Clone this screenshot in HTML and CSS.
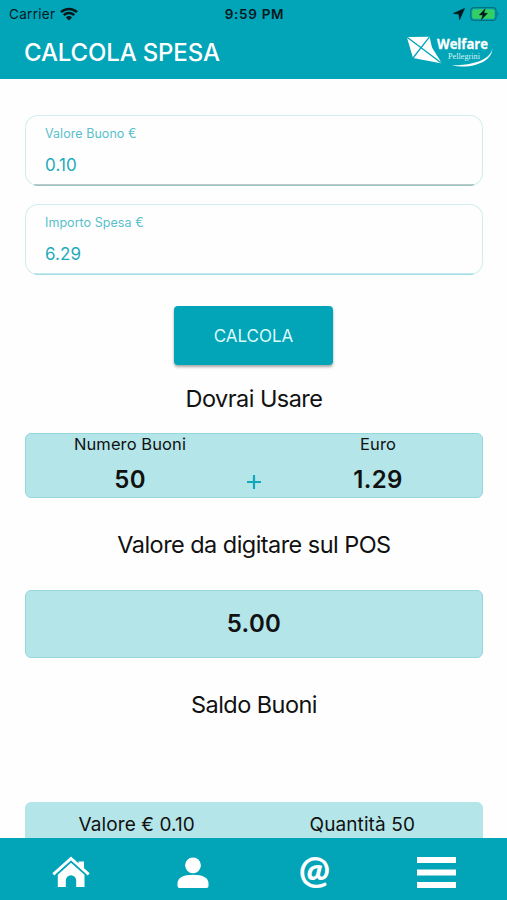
FILE: index.html
```html
<!DOCTYPE html>
<html lang="it">
  <head>
    <meta charset="UTF-8" />
    <meta name="viewport" content="width=device-width, initial-scale=1.0" />
    <title>Calcola Spesa</title>
    <link rel="stylesheet" href="styles.css">
  </head>
  <body>
    <header class="header">
      <div class="status">
        <div class="status-left">
          <span class="carrier">Carrier</span>
          <svg class="wifi" viewBox="0 0 18 14">
            <path d="M1 5.2a11.6 11.6 0 0 1 16 0M3.8 8.2a7.5 7.5 0 0 1 10.4 0" fill="none" stroke="#04191c" stroke-width="2.5" />
            <path d="M9 13.6 5.9 10.5a4.5 4.5 0 0 1 6.2 0z" fill="#04191c" />
          </svg>
        </div>
        <span class="clock">9:59 PM</span>
        <div class="status-right">
          <svg class="location" viewBox="0 0 12 12">
            <path d="M11.5.5 6.6 11.5 5.9 6.1.5 5.4z" fill="#04191c" stroke="#04191c" stroke-width=".7" />
          </svg>
          <svg class="battery" viewBox="0 0 30 14">
            <rect x=".7" y=".7" width="25.4" height="12.6" rx="3.4" fill="none" stroke="#04737f" stroke-width="1.2" />
            <path d="M27.6 4.6q2 2.4 0 4.8z" fill="#04737f" />
            <rect x="2.2" y="2.2" width="22.4" height="9.6" rx="2" fill="#33cf65" />
            <path d="M15.2 1.8 9.3 7.9h3.5l-1.4 4.8 6-6.4h-3.6z" fill="#04191c" stroke="#04191c" stroke-width=".5" />
          </svg>
        </div>
      </div>
      <div class="title-bar">
        <h1 class="title">CALCOLA SPESA</h1>
        <svg class="logo" viewBox="0 0 88 40">
          <path d="M.8 5 23.500 4.800 26 15.500 36 31.500 7 26z" fill="#fff" />
          <path d="M.8 5 36 31.500M23.500 4.800 7 26" fill="none" stroke="#02a4b8" stroke-width="1.300" />
          <path d="M85.500 12c4 10-8 21.500-40 21.300C66 38 91 29 85.500 12z" fill="#fff" />
          <text class="logo-name" x="31" y="16.700" textLength="51" lengthAdjust="spacingAndGlyphs">Welfare</text>
          <text class="logo-sub" x="42" y="27" textLength="32" lengthAdjust="spacingAndGlyphs">Pellegrini</text>
        </svg>
      </div>
    </header>

    <main class="content">
      <div class="field">
        <label class="field-label">Valore Buono €</label>
        <span class="field-value">0.10</span>
      </div>
      <div class="field field-active">
        <label class="field-label">Importo Spesa €</label>
        <span class="field-value">6.29</span>
      </div>

      <button class="btn">CALCOLA</button>

      <h2 class="heading heading-usare">Dovrai Usare</h2>
      <div class="box box-result">
        <div class="col">
          <span class="col-label">Numero Buoni</span>
          <span class="number">50</span>
        </div>
        <svg class="plus" viewBox="0 0 14 14">
          <path d="M7 0v14M0 7h14" stroke="#12a8bb" stroke-width="2.2" />
        </svg>
        <div class="col">
          <span class="col-label">Euro</span>
          <span class="number">1.29</span>
        </div>
      </div>

      <h2 class="heading heading-pos">Valore da digitare sul POS</h2>
      <div class="box box-pos">
        <span class="number">5.00</span>
      </div>

      <h2 class="heading heading-saldo">Saldo Buoni</h2>
      <div class="box box-saldo">
        <span class="saldo-item">Valore € 0.10</span>
        <span class="saldo-item saldo-qty">Quantità 50</span>
      </div>
    </main>

    <nav class="tabs">
      <a class="tab">
        <svg class="icon-home" viewBox="0 0 38 32">
          <path d="M1.300 18.300 19 2.500l17.700 15.800" fill="none" stroke="#fff" stroke-width="3" />
          <path d="M26.500 5.500H32V14l-5.500-4.900zM19 6.800 32.500 18.800V31H24.200V24.500a5.200 5.200 0 0 0-10.400 0V31H5.800V18.800z" fill="#fff" />
          <path d="M4 18.600 19 5.300l15 13.300" fill="none" stroke="#02a4b8" stroke-width="1" />
        </svg>
      </a>
      <a class="tab">
        <svg class="icon-user" viewBox="0 0 32 32">
          <circle cx="16" cy="8.300" r="7.900" fill="#fff" />
          <path d="M.5 29v-2.500C.5 20.500 6 17.700 16 17.700s15.500 2.800 15.500 8.800V29q0 2-2 2h-27q-2 0-2-2z" fill="#fff" />
        </svg>
      </a>
      <a class="tab"><span class="icon-at">@</span></a>
      <a class="tab">
        <svg class="icon-menu" viewBox="0 0 39 31">
          <path d="M0 3h39M0 15.500h39M0 28h39" stroke="#fff" stroke-width="5.800" />
        </svg>
      </a>
    </nav>
  </body>
</html>
```
FILE: styles.css
```css
* {
  box-sizing: border-box;
}
body {
  margin: 0;
  height: 900px;
  display: flex;
  flex-direction: column;
  overflow: hidden;
  background: #fefefe;
  font-family: Inter, "Liberation Sans", sans-serif;
  color: #111;
}
.header {
  flex: none;
  height: 79px;
  background: #02a4b8;
}
.status {
  display: grid;
  grid-template-columns: 1fr auto 1fr;
  align-items: center;
  height: 27px;
  padding: 0 7px 0 9px;
  color: #04191c;
  font-size: 13px;
}
.status-left,
.status-right {
  display: flex;
  align-items: center;
}
.status-left {
  gap: 5px;
}
.status-right {
  justify-content: flex-end;
  gap: 5px;
}
.carrier {
  font-size: 13.5px;
  letter-spacing: 0.3px;
}
.wifi {
  width: 18px;
  height: 14px;
}
.clock {
  font-size: 13.5px;
  font-weight: 600;
  letter-spacing: 0.7px;
}
.location {
  width: 12px;
  height: 12px;
}
.battery {
  width: 30px;
  height: 14px;
}
.title-bar {
  display: flex;
  align-items: center;
  justify-content: space-between;
  height: 50px;
  padding: 0 13px 0 24px;
}
.title {
  margin: 0;
  font-size: 24px;
  font-weight: 500;
  letter-spacing: -0.15px;
  color: #fff;
}
.logo {
  width: 88px;
  height: 40px;
  overflow: visible;
}
.logo-name {
  font: bold 15px "Open Sans", sans-serif;
  fill: #fff;
  stroke: #fff;
  stroke-width: 0.3px;
}
.logo-sub {
  font: 8.5px "Liberation Serif", serif;
  fill: #d8f4f6;
}
.content {
  flex: 1;
  min-height: 0;
  overflow: hidden;
  display: flex;
  flex-direction: column;
  padding: 36px 24px 0 25px;
}
.field {
  flex: none;
  display: flex;
  flex-direction: column;
  height: 71px;
  margin-bottom: 18px;
  padding: 10px 19px 0;
  border: 1px solid rgba(2, 164, 160, 0.18);
  border-radius: 13px;
  background: linear-gradient(#bccac9, #bccac9) center bottom / calc(100% - 18px) 2px no-repeat border-box;
  color: #1fabbc;
}
.field-active {
  background-image: linear-gradient(#c5e9ef, #c5e9ef);
}
.field-label {
  font-size: 12.5px;
  line-height: 16px;
  letter-spacing: 0.05px;
  color: #58c0cb;
}
.field-value {
  margin-top: 13px;
  font-size: 17px;
  line-height: 20px;
  letter-spacing: 0.1px;
}
.btn {
  flex: none;
  align-self: center;
  width: 159px;
  height: 59px;
  margin: 13px 1px 0 0;
  padding: 0;
  border: 0;
  border-radius: 4px;
  background: #02a4b8;
  box-shadow: 0 2px 3px rgba(0, 0, 0, 0.35);
  font-family: inherit;
  font-size: 17px;
  color: #dcfafa;
}
.heading {
  flex: none;
  margin: 0;
  font-size: 23.5px;
  font-weight: 400;
  line-height: 28px;
  letter-spacing: -0.55px;
  text-align: center;
}
.heading-usare {
  margin-top: 20px;
}
.heading-pos {
  margin-top: 33px;
}
.heading-saldo {
  margin-top: 33px;
}
.box {
  flex: none;
  display: flex;
  border: 1px solid #94d7dc;
  border-radius: 6px;
  background: #b4e5e8;
}
.box-result {
  height: 65px;
  margin-top: 20px;
}
.col {
  flex: 1;
  display: flex;
  flex-direction: column;
  align-items: center;
}
.col-label {
  font-size: 16.5px;
  line-height: 20px;
  letter-spacing: 0.1px;
}
.number {
  margin-top: 11px;
  font-size: 24px;
  font-weight: 600;
  line-height: 30px;
  letter-spacing: 0.3px;
}
.plus {
  width: 14px;
  height: 14px;
  margin: 41px 13px 0;
}
.box-pos {
  height: 68px;
  margin-top: 31px;
  align-items: center;
  justify-content: center;
}
.box-pos .number {
  margin-top: 0;
}
.box-saldo {
  height: 70px;
  margin-top: 83px;
  border-color: #b4e5e8;
}
.saldo-item {
  flex: 1;
  margin-top: 9px;
  padding-right: 4px;
  font-size: 19px;
  line-height: 26px;
  letter-spacing: 0.1px;
  text-align: center;
}
.saldo-qty {
  padding-right: 9px;
}
.tabs {
  flex: none;
  display: grid;
  grid-template-columns: repeat(4, 122px);
  justify-content: center;
  height: 62px;
  padding-top: 19px;
  background: #02a4b8;
}
.tab {
  display: flex;
  justify-content: center;
}
.icon-home {
  width: 38px;
  height: 32px;
  margin-top: -1px;
}
.icon-user {
  width: 32px;
  height: 32px;
}
.icon-at {
  margin-top: -3px;
  font: 900 37px/30px Lato, sans-serif;
  color: #fff;
}
.icon-menu {
  width: 39px;
  height: 31px;
}
```
